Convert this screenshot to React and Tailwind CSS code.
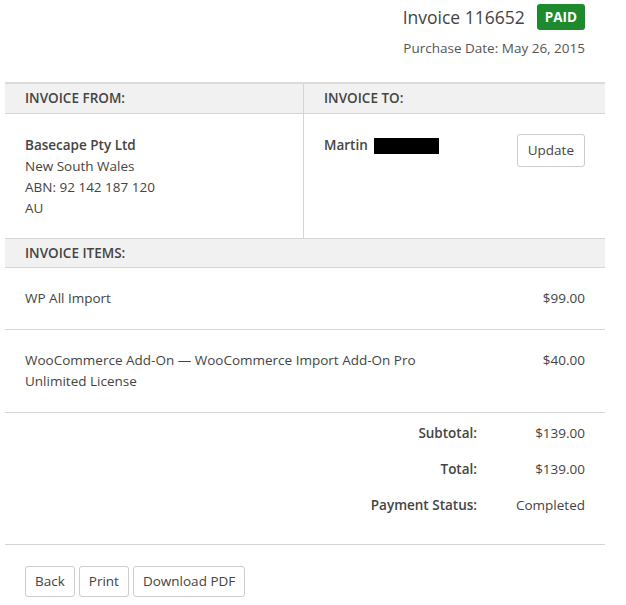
const items = [
  { name: 'WP All Import', price: '$99.00' },
  { name: 'WooCommerce Add-On — WooCommerce Import Add-On Pro', sub: 'Unlimited License', price: '$40.00' },
]

const totals = [
  { label: 'Subtotal:', value: '$139.00' },
  { label: 'Total:', value: '$139.00' },
  { label: 'Payment Status:', value: 'Completed' },
]

const App = () => {
  return (
    <div className="w-[626px] h-[605px] bg-white text-[#444] text-[13.5px] leading-[21px] font-['Open_Sans',sans-serif] overflow-hidden">
      {/* Header */}
      <div className="flex flex-col items-end pr-[41px] pt-[4px]">
        <div className="flex items-center gap-[12px]">
          <h1 className="text-[17.5px] leading-[26px] text-[#444]">Invoice 116652</h1>
          <span className="bg-[#1e8a2e] text-white font-bold text-[13.5px] leading-[26px] px-[8px] rounded-[3px]">PAID</span>
        </div>
        <p className="mt-[8px] text-[#555]">Purchase Date: May 26, 2015</p>
      </div>

      <div className="mx-[5px] w-[600px] mt-[23px]">
        {/* From / To */}
        <div className="grid grid-cols-[299px_301px] border-t-2 border-[#dcdcdc]">
          <div className="bg-[#f1f1f1] border-b border-r border-[#d5d5d5] h-[30px] px-[20px] flex items-center font-semibold text-[#444]">
            INVOICE FROM:
          </div>
          <div className="bg-[#f1f1f1] border-b border-[#d5d5d5] h-[30px] px-[20px] flex items-center font-semibold text-[#444]">
            INVOICE TO:
          </div>
          <div className="border-r border-[#d5d5d5] h-[124px] px-[20px] pt-[21px]">
            <div className="font-semibold">Basecape Pty Ltd</div>
            <div>New South Wales</div>
            <div>ABN: 92 142 187 120</div>
            <div>AU</div>
          </div>
          <div className="h-[124px] pl-[20px] pr-[20px] pt-[21px] flex justify-between items-start">
            <div className="flex items-center font-semibold">
              Martin
              <span className="inline-block w-[65px] h-[16px] bg-black ml-[6px]"></span>
            </div>
            <button className="border border-[#ccc] rounded-[3px] h-[33px] px-[10px] -mt-[1px] text-[#444] bg-white">
              Update
            </button>
          </div>
        </div>

        {/* Items */}
        <div className="bg-[#f1f1f1] border-t border-b border-[#d5d5d5] h-[30px] px-[20px] flex items-center font-semibold">
          INVOICE ITEMS:
        </div>
        {items.map((item) => (
          <div key={item.name} className="flex justify-between px-[20px] pt-[20px] pb-[20px] border-b border-[#d5d5d5]">
            <div>
              <div>{item.name}</div>
              {item.sub && <div>{item.sub}</div>}
            </div>
            <div>{item.price}</div>
          </div>
        ))}

        {/* Totals */}
        <div className="flex flex-col gap-[15px] pt-[10px] pb-[28px] border-b border-[#d5d5d5]">
          {totals.map((t) => (
            <div key={t.label} className="flex justify-end pr-[20px]">
              <div className="font-semibold text-right">{t.label}</div>
              <div className="w-[108px] text-right">{t.value}</div>
            </div>
          ))}
        </div>

        {/* Actions */}
        <div className="flex gap-[4px] px-[20px] pt-[21px]">
          <button className="border border-[#ccc] rounded-[3px] h-[31px] px-[9px] bg-white text-[#444]">Back</button>
          <button className="border border-[#ccc] rounded-[3px] h-[31px] px-[9px] bg-white text-[#444]">Print</button>
          <button className="border border-[#ccc] rounded-[3px] h-[31px] px-[9px] bg-white text-[#444]">Download PDF</button>
        </div>
      </div>
    </div>
  )
}

export default App
